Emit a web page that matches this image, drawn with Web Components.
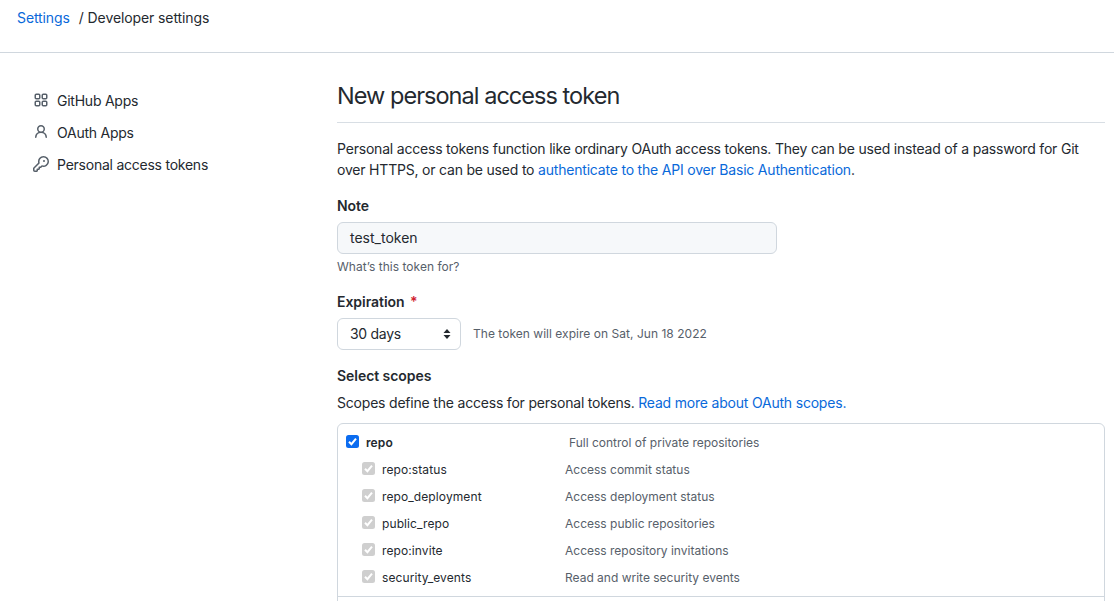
<!DOCTYPE html>
<html>
<head>
<meta charset="utf-8">
<title>New personal access token</title>
<style>
  html, body { margin: 0; height: 601px; overflow: hidden; background: #fff; }
  body { font-family: Inter, "Liberation Sans", sans-serif; font-size: 14px; color: #24292f; }
</style>
</head>
<body>
<settings-header></settings-header>
<settings-layout>
  <side-nav slot="side">
    <nav-item icon="apps">GitHub Apps</nav-item>
    <nav-item icon="person">OAuth Apps</nav-item>
    <nav-item icon="key">Personal access tokens</nav-item>
  </side-nav>
  <token-form>
    <scope-box>
      <scope-row parent name="repo" desc="Full control of private repositories"></scope-row>
      <scope-row name="repo:status" desc="Access commit status"></scope-row>
      <scope-row name="repo_deployment" desc="Access deployment status"></scope-row>
      <scope-row name="public_repo" desc="Access public repositories"></scope-row>
      <scope-row name="repo:invite" desc="Access repository invitations"></scope-row>
      <scope-row name="security_events" desc="Read and write security events"></scope-row>
    </scope-box>
  </token-form>
</settings-layout>

<script>
const ICONS = {
    apps: '<rect x="2.25" y="2.25" width="4.5" height="4.5" rx="1" fill="none" stroke="currentColor" stroke-width="1.5"/><rect x="9.25" y="2.25" width="4.5" height="4.5" rx="1" fill="none" stroke="currentColor" stroke-width="1.5"/><rect x="2.25" y="9.25" width="4.5" height="4.5" rx="1" fill="none" stroke="currentColor" stroke-width="1.5"/><rect x="9.25" y="9.25" width="4.5" height="4.5" rx="1" fill="none" stroke="currentColor" stroke-width="1.5"/>',
    person: '<path fill="currentColor" d="M10.561 8.073a6.005 6.005 0 0 1 3.432 5.142.75.75 0 1 1-1.498.07 4.5 4.5 0 0 0-8.99 0 .75.75 0 0 1-1.498-.07 6.004 6.004 0 0 1 3.431-5.142 3.999 3.999 0 1 1 5.123 0ZM10.5 5a2.5 2.5 0 1 0-5 0 2.5 2.5 0 0 0 5 0Z"/>',
    key: '<path fill="currentColor" d="M10.5 0a5.499 5.499 0 1 1-1.288 10.848l-.932.932a.749.749 0 0 1-.53.22H7v.75a.749.749 0 0 1-.22.53l-.5.5a.749.749 0 0 1-.53.22H5v.75a.749.749 0 0 1-.22.53l-.5.5a.749.749 0 0 1-.53.22h-2A1.75 1.75 0 0 1 0 14.25v-2c0-.199.079-.389.22-.53l4.932-4.932A5.5 5.5 0 0 1 10.5 0Zm-4 5.5c-.001.431.069.86.205 1.269a.75.75 0 0 1-.181.768L1.5 12.56v1.69c0 .138.112.25.25.25h1.69l.06-.06v-1.19a.75.75 0 0 1 .75-.75h1.19l.06-.06v-1.19a.75.75 0 0 1 .75-.75h1.19l1.023-1.025a.75.75 0 0 1 .768-.18A4 4 0 1 0 6.5 5.5ZM11 6a1 1 0 1 1 0-2 1 1 0 0 1 0 2Z"/>'
};

class SettingsHeader extends HTMLElement {
    constructor() {
        super();
        this.attachShadow({ mode: 'open' });
        this.shadowRoot.innerHTML = `
            <style>
                :host { display: block; height: 52px; border-bottom: 1px solid #d0d7de; padding-left: 17px; letter-spacing: -0.1px; }
                div { display: flex; height: 34px; align-items: center; }
                a { color: #0969da; text-decoration: none; }
                span { margin-left: 9px; }
            </style>
            <div><a href="#">Settings</a><span>/ Developer settings</span></div>
        `;
    }
}

class SettingsLayout extends HTMLElement {
    constructor() {
        super();
        this.attachShadow({ mode: 'open' });
        this.shadowRoot.innerHTML = `
            <style>
                :host { display: grid; grid-template-columns: 305px 768px; padding: 32px 0 0 32px; }
            </style>
            <div><slot name="side"></slot></div>
            <div><slot></slot></div>
        `;
    }
}

class SideNav extends HTMLElement {
    constructor() {
        super();
        this.attachShadow({ mode: 'open' });
        this.shadowRoot.innerHTML = `
            <style>:host { display: flex; flex-direction: column; margin-top: -1px; }</style>
            <slot></slot>
        `;
    }
}

class NavItem extends HTMLElement {
    constructor() {
        super();
        this.attachShadow({ mode: 'open' });
        const icon = ICONS[this.getAttribute('icon')] || '';
        this.shadowRoot.innerHTML = `
            <style>
                :host { display: flex; align-items: center; gap: 8px; height: 32px; letter-spacing: -0.24px; }
                svg { color: #57606a; flex: none; margin-left: 1px; }
            </style>
            <svg width="16" height="16" viewBox="0 0 16 16">${icon}</svg>
            <slot></slot>
        `;
    }
}

class TokenForm extends HTMLElement {
    constructor() {
        super();
        this.attachShadow({ mode: 'open' });
        this.shadowRoot.innerHTML = `
            <style>
                :host { display: block; letter-spacing: -0.2px; }
                h2 { margin: 0; font-size: 23.5px; font-weight: 400; line-height: 22px; padding-bottom: 15px; border-bottom: 1px solid #d8dee4; letter-spacing: -0.96px; }
                p { margin: 0; }
                a { color: #0969da; text-decoration: none; }
                .intro { margin-top: 15px; line-height: 21px; }
                label, .label { display: block; font-weight: 600; line-height: 20px; letter-spacing: -0.05px; }
                .note { margin-top: 16px; }
                .input { display: flex; align-items: center; box-sizing: border-box; width: 440px; height: 32px; margin-top: 6px; padding: 0 12px 2px; background: #f6f8fa; border: 1px solid #d0d7de; border-radius: 6px; letter-spacing: 0; }
                .hint { font-size: 12px; color: #57606a; line-height: 18px; margin-top: 4px; letter-spacing: 0.03px; }
                .exp { margin-top: 16px; }
                .req { color: #cf222e; margin-left: 2px; }
                .exp-row { display: flex; align-items: center; gap: 12px; margin-top: 6px; }
                .select { display: flex; align-items: center; justify-content: space-between; box-sizing: border-box; width: 124px; height: 32px; padding: 0 9px 0 12px; border: 1px solid #d0d7de; border-radius: 6px; letter-spacing: -0.3px; }
                .select span { padding-bottom: 2px; }
                .scopes { margin-top: 16px; }
                .scopes-desc { line-height: 20px; margin: 7px 0 10px; }
            </style>
            <h2>New personal access token</h2>
            <p class="intro">Personal access tokens function like ordinary OAuth access tokens. They can be used instead of a password for Git over HTTPS, or can be used to <a href="#">authenticate to the API over Basic Authentication</a>.</p>
            <label class="note">Note</label>
            <div class="input">test_token</div>
            <p class="hint">What’s this token for?</p>
            <div class="label exp">Expiration <span class="req">*</span></div>
            <div class="exp-row">
                <div class="select"><span>30 days</span>
                    <svg width="8" height="12" viewBox="0 0 8 12"><path fill="#24292f" d="M4 1 7.5 5H.5zM4 11 .5 7h7z"/></svg>
                </div>
                <span class="hint" style="margin:0">The token will expire on Sat, Jun 18 2022</span>
            </div>
            <div class="label scopes">Select scopes</div>
            <p class="scopes-desc">Scopes define the access for personal tokens. <a href="#">Read more about OAuth scopes.</a></p>
            <slot></slot>
        `;
    }
}

class ScopeBox extends HTMLElement {
    constructor() {
        super();
        this.attachShadow({ mode: 'open' });
        this.shadowRoot.innerHTML = `
            <style>
                :host { display: block; border: 1px solid #d0d7de; border-radius: 6px 6px 0 0; padding-top: 5px; }
                .sep { border-top: 1px solid #d0d7de; margin: 5px -1px 0; height: 20px; }
            </style>
            <slot></slot>
            <div class="sep"></div>
        `;
    }
}

class ScopeRow extends HTMLElement {
    constructor() {
        super();
        this.attachShadow({ mode: 'open' });
        const parent = this.hasAttribute('parent');
        this.shadowRoot.innerHTML = `
            <style>
                :host { display: grid; grid-template-columns: ${parent ? '223px 1fr' : '203px 1fr'}; align-items: center; height: 27px; font-size: 12px; letter-spacing: 0; padding-left: ${parent ? '8px' : '24px'}; }
                .name { display: flex; align-items: center; gap: 7px; font-weight: ${parent ? 600 : 400}; letter-spacing: 0.1px; }
                .box { box-sizing: border-box; width: 13px; height: 13px; border-radius: 2.5px; background: ${parent ? '#0b6cf0' : '#cfcfcf'}; margin-top: -3px; flex: none; }
                svg { display: block; }
                .desc { color: #57606a; }
            </style>
            <div class="name">
                <span class="box"><svg width="13" height="13" viewBox="0 0 13 13"><path d="M3 6.7 5.4 9.2 10 3.6" fill="none" stroke="#fff" stroke-width="2"/></svg></span>
                <span>${this.getAttribute('name')}</span>
            </div>
            <div class="desc">${this.getAttribute('desc')}</div>
        `;
    }
}

customElements.define('settings-header', SettingsHeader);
customElements.define('settings-layout', SettingsLayout);
customElements.define('side-nav', SideNav);
customElements.define('nav-item', NavItem);
customElements.define('token-form', TokenForm);
customElements.define('scope-box', ScopeBox);
customElements.define('scope-row', ScopeRow);
</script>
</body>
</html>
